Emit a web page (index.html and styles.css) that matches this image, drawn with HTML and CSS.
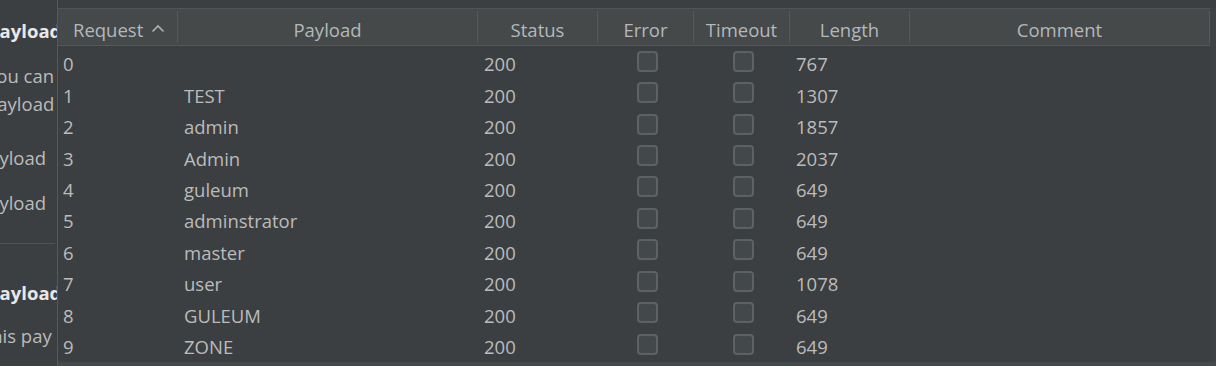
FILE: index.html
```html
<!DOCTYPE html>
<html>
<head>
<meta charset="utf-8">
<link rel="stylesheet" href="styles.css">
</head>
<body>
<div class="app">
  <aside class="side">
    <div class="ln bold b1">Payload</div>
    <div class="ln p1">You can</div>
    <div class="ln p2">payload</div>
    <div class="ln p3">Payload</div>
    <div class="ln p4">Payload</div>
    <div class="sep"></div>
    <div class="ln bold b2">Payload</div>
    <div class="ln p5">This pay</div>
  </aside>
  <main class="results">
    <div class="top"></div>
    <div class="tablebox">
      <div class="grid">
        <div class="head">
          <div class="hc left">Request <svg class="chev" width="14" height="9" viewBox="0 0 14 9"><polyline points="1.5,7.5 7,2 12.5,7.5" fill="none" stroke="#aeb3b6" stroke-width="1.6"/></svg></div>
          <div class="hc">Payload</div>
          <div class="hc">Status</div>
          <div class="hc">Error</div>
          <div class="hc">Timeout</div>
          <div class="hc">Length</div>
          <div class="hc">Comment</div>
        </div>
        <div class="body">
          <div class="row"><span class="c req">0</span><span class="c pl"></span><span class="c st">200</span><span class="c cb"><i class="box"></i></span><span class="c cb"><i class="box"></i></span><span class="c len">767</span><span class="c"></span></div>
          <div class="row"><span class="c req">1</span><span class="c pl">TEST</span><span class="c st">200</span><span class="c cb"><i class="box"></i></span><span class="c cb"><i class="box"></i></span><span class="c len">1307</span><span class="c"></span></div>
          <div class="row"><span class="c req">2</span><span class="c pl">admin</span><span class="c st">200</span><span class="c cb"><i class="box"></i></span><span class="c cb"><i class="box"></i></span><span class="c len">1857</span><span class="c"></span></div>
          <div class="row"><span class="c req">3</span><span class="c pl">Admin</span><span class="c st">200</span><span class="c cb"><i class="box"></i></span><span class="c cb"><i class="box"></i></span><span class="c len">2037</span><span class="c"></span></div>
          <div class="row"><span class="c req">4</span><span class="c pl">guleum</span><span class="c st">200</span><span class="c cb"><i class="box"></i></span><span class="c cb"><i class="box"></i></span><span class="c len">649</span><span class="c"></span></div>
          <div class="row"><span class="c req">5</span><span class="c pl">adminstrator</span><span class="c st">200</span><span class="c cb"><i class="box"></i></span><span class="c cb"><i class="box"></i></span><span class="c len">649</span><span class="c"></span></div>
          <div class="row"><span class="c req">6</span><span class="c pl">master</span><span class="c st">200</span><span class="c cb"><i class="box"></i></span><span class="c cb"><i class="box"></i></span><span class="c len">649</span><span class="c"></span></div>
          <div class="row"><span class="c req">7</span><span class="c pl">user</span><span class="c st">200</span><span class="c cb"><i class="box"></i></span><span class="c cb"><i class="box"></i></span><span class="c len">1078</span><span class="c"></span></div>
          <div class="row"><span class="c req">8</span><span class="c pl">GULEUM</span><span class="c st">200</span><span class="c cb"><i class="box"></i></span><span class="c cb"><i class="box"></i></span><span class="c len">649</span><span class="c"></span></div>
          <div class="row"><span class="c req">9</span><span class="c pl">ZONE</span><span class="c st">200</span><span class="c cb"><i class="box"></i></span><span class="c cb"><i class="box"></i></span><span class="c len">649</span><span class="c"></span></div>
        </div>
      </div>
      <div class="vscroll"></div>
    </div>
    <div class="hscroll"></div>
  </main>
</div>
</body>
</html>
```

FILE: styles.css
```css
* { box-sizing: border-box; }
html, body { margin: 0; padding: 0; }
body {
  width: 1216px;
  height: 366px;
  overflow: hidden;
  background: #3c3f41;
  font-family: "Open Sans", "Noto Sans", sans-serif;
  font-size: 18.5px;
  color: #bbbbbb;
}
.app {
  display: flex;
  height: 366px;
}
.side {
  width: 58px;
  flex: none;
  overflow: hidden;
  border-right: 1px solid #56595b;
  display: flex;
  flex-direction: column;
  white-space: nowrap;
}
.ln { line-height: 28px; height: 28px; }
.bold { font-weight: 700; color: #e8e8e8; }
.b1 { margin-top: 17px; margin-left: -12px; }
.p1 { margin-top: 17px; margin-left: -14px; }
.p2 { margin-left: -14px; }
.p3 { margin-top: 26px; margin-left: -22px; }
.p4 { margin-top: 17px; margin-left: -22px; }
.sep { margin-top: 26px; height: 1px; background: #505355; margin-right: 2px; flex: none; }
.b2 { margin-top: 35px; margin-left: -12px; }
.p5 { margin-top: 15px; margin-left: -19px; }

.results {
  flex: 1;
  display: flex;
  flex-direction: column;
  min-width: 0;
}
.top { height: 8px; flex: none; background: #3c3f41; }
.tablebox {
  flex: 1;
  display: flex;
  min-height: 0;
}
.grid { width: 1152px; flex: none; }
.head {
  display: grid;
  grid-template-columns: 120px 300px 120px 96px 96px 120px 300px;
  height: 38px;
  padding: 2px 0 2px;
  border-top: 1px solid #515457;
  border-bottom: 1px solid #56595b;
  background: #45494a;
  color: #b3b8bb;
}
.hc {
  border-right: 1px solid #55595b;
  display: flex;
  align-items: center;
  justify-content: center;
  padding-top: 6px;
  line-height: 20px;
}
.hc.left { justify-content: flex-start; padding-left: 15px; }
.chev { margin-left: 8px; margin-top: -3px; }
.body { background: #3c3f41; }
.row {
  display: grid;
  grid-template-columns: 120px 300px 120px 96px 96px 120px 300px;
  height: 31.45px;
  align-items: center;
}
.c { padding-top: 5px; line-height: 20px; white-space: nowrap; }
.req { padding-left: 5px; }
.pl, .st, .len { padding-left: 6px; }
.cb { display: flex; justify-content: center; padding-top: 0; padding-left: 3px; }
.box {
  display: block;
  width: 21px;
  height: 21px;
  border: 2px solid #5e6163;
  border-radius: 4px;
  background: #43494a;
  margin-top: -1px;
}
.vscroll { flex: 1; background: #3f4244; }
.hscroll { height: 4px; flex: none; background: #46494b; }
```
